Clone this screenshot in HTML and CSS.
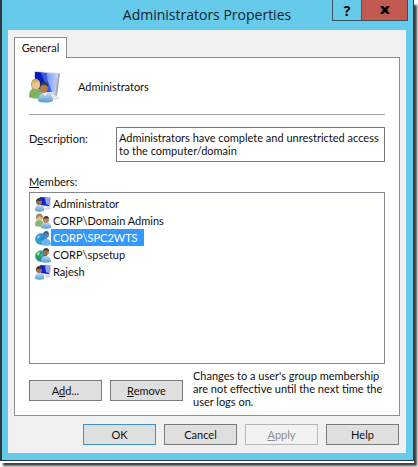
FILE: index.html
```html
<!DOCTYPE html>
<html lang="en">
<head>
    <meta charset="UTF-8">
    <meta name="viewport" content="width=device-width, initial-scale=1.0">
    <title>Administrators Properties</title>
    <link rel="stylesheet" href="styles.css">
</head>
<body>
    <!-- Shared icon shapes -->
    <svg class="sprite" aria-hidden="true">
        <defs>
            <linearGradient id="screen" x1="0" y1="0" x2="1" y2="0">
                <stop offset="0" stop-color="#0a14b4"/>
                <stop offset="0.45" stop-color="#1c35dc"/>
                <stop offset="0.55" stop-color="#7f9df2"/>
                <stop offset="1" stop-color="#c3d5fa"/>
            </linearGradient>
            <radialGradient id="globe" cx="0.35" cy="0.3" r="0.8">
                <stop offset="0" stop-color="#8cd4f4"/>
                <stop offset="0.6" stop-color="#2077cc"/>
                <stop offset="1" stop-color="#114a98"/>
            </radialGradient>
            <linearGradient id="blueShirt" x1="0" y1="0" x2="0" y2="1">
                <stop offset="0" stop-color="#bcdcf4"/>
                <stop offset="1" stop-color="#5a9bcf"/>
            </linearGradient>
        </defs>
        <symbol id="icon-user" viewBox="0 0 16 16">
            <path d="M4 1l12 0-1 10-10-1z" fill="#c9ced6"/>
            <path d="M5 1l10 1-1 8-8-1z" fill="#1325c4"/>
            <path d="M10 2l5 0-1 7-3-1z" fill="#8da8f0"/>
            <path d="M9 12l5-1 2 2-5 1z" fill="#d5d8dd"/>
            <path d="M0 15c0-4 1-6 4-6s6 2 5 6c-3 1-6 1-9 0z" fill="url(#blueShirt)"/>
            <circle cx="4" cy="6" r="3" fill="#a56e4b"/>
            <path d="M1 6c0-5 6-5 6-1L3 5z" fill="#343a43"/>
        </symbol>
        <symbol id="icon-group" viewBox="0 0 16 16">
            <path d="M0 13c0-4 1-6 4-6s5 2 5 6c-3 1-6 1-9 0z" fill="#87b873"/>
            <circle cx="4.500" cy="4.500" r="3.200" fill="#e1b887"/>
            <path d="M1 6c-1-7 7-7 7-1L4 3z" fill="#9c8b4c"/>
            <path d="M6 15c0-4 2-6 5-6s5 2 5 6c-3 1-7 1-10 0z" fill="url(#blueShirt)"/>
            <circle cx="11" cy="7" r="3" fill="#b98560"/>
            <path d="M8 7c0-5 6-5 6-1l-4-1z" fill="#3b3533"/>
        </symbol>
        <symbol id="icon-domain-user" viewBox="0 0 16 16">
            <circle cx="6" cy="9" r="5.800" fill="url(#globe)"/>
            <path d="M1 7l4-3 3 2-3 3 2 2-2 3c-3-1-5-4-4-7z" fill="#29a452"/>
            <path d="M2 7l2-2 1 1-2 3z" fill="#b9ecc7"/>
            <path d="M6 15c0-4 2-6 5-6s5 2 5 6c-3 1-7 1-10 0z" fill="url(#blueShirt)"/>
            <circle cx="11" cy="5" r="3" fill="#a56e4b"/>
            <path d="M8 5c0-5 6-5 6-1l-4-1z" fill="#303740"/>
        </symbol>
        <symbol id="icon-domain-user-selected" viewBox="0 0 16 16">
            <circle cx="6" cy="9" r="5.800" fill="#2387d8"/>
            <path d="M1 7l4-3 3 2-3 3 2 2-2 3c-3-1-5-4-4-7z" fill="#32a0c5"/>
            <path d="M2 7l2-2 1 1-2 3z" fill="#8fd0f2"/>
            <path d="M6 15c0-4 2-6 5-6s5 2 5 6c-3 1-7 1-10 0z" fill="#6db4ee"/>
            <circle cx="11" cy="5" r="3" fill="#5b84ad"/>
            <path d="M8 5c0-5 6-5 6-1l-4-1z" fill="#27629f"/>
        </symbol>
    </svg>

    <div class="window">
        <div class="title-bar">
            <h1>Administrators Properties</h1>
            <div class="window-buttons">
                <button type="button" class="help-btn" aria-label="Help">?</button>
                <button type="button" class="close-btn" aria-label="Close">
                    <svg viewBox="0 0 10 8"><path d="M0 0h3l2 2 2-2h3L7 4l3 4H7L5 6 3 8H0l3-4z"/></svg>
                </button>
            </div>
        </div>

        <form class="client">
            <div class="tabs" role="tablist">
                <button type="button" class="tab" role="tab" aria-selected="true">General</button>
            </div>

            <div class="panel" role="tabpanel">
                <div class="group-header">
                    <svg class="group-icon" viewBox="0 0 32 32">
                        <ellipse cx="24" cy="27" rx="7" ry="2" fill="#e4e5e8"/>
                        <path d="M5 0l26 2-3 23-22-3z" fill="#d4d8df"/>
                        <path d="M31 2l-3 23-2-1 3-21z" fill="#a4a9b3"/>
                        <path d="M6 1l23 2-3 18-20-2z" fill="url(#screen)"/>
                        <path d="M6 1l9 1 6 19-15-2z" fill="#0b18bd"/>
                        <path d="M12 2l4 0 7 19-4-1z" fill="#365be6"/>
                        <path d="M0 26c0-6 2-9 7-9s7 3 7 9c-4 2-10 2-14 0z" fill="#7db45a"/>
                        <path d="M2 15c-1-9 10-10 9 0l-2 4H4z" fill="#b9a45e"/>
                        <circle cx="7" cy="14" r="4" fill="#edc394"/>
                        <path d="M2 13c1-6 9-5 9-1L7 11z" fill="#cbb66c"/>
                        <path d="M9 30c0-6 3-8 7-8s8 2 8 8c-4 2-11 2-15 0z" fill="url(#blueShirt)"/>
                        <path d="M14 22l2 3 2-3z" fill="#f2f7fb"/>
                        <ellipse cx="15" cy="17" rx="4" ry="5" fill="#b47a52"/>
                        <path d="M11 16c-1-7 9-7 8 0-2-3-6-3-8 0z" fill="#343a3e"/>
                    </svg>
                    <span>Administrators</span>
                </div>

                <div class="description-row">
                    <label for="description">D<u>e</u>scription:</label>
                    <textarea id="description" rows="2" spellcheck="false">Administrators have complete and unrestricted access to the computer/domain</textarea>
                </div>

                <div class="members-label" id="membersLabel"><u>M</u>embers:</div>
                <ul class="members" role="listbox" aria-labelledby="membersLabel" tabindex="0">
                    <li role="option"><svg><use href="#icon-user"/></svg><span>Administrator</span></li>
                    <li role="option"><svg><use href="#icon-group"/></svg><span>CORP\Domain Admins</span></li>
                    <li role="option" class="selected" aria-selected="true"><svg><use href="#icon-domain-user-selected"/></svg><span>CORP\SPC2WTS</span></li>
                    <li role="option"><svg><use href="#icon-domain-user"/></svg><span>CORP\spsetup</span></li>
                    <li role="option"><svg><use href="#icon-user"/></svg><span>Rajesh</span></li>
                </ul>

                <div class="member-actions">
                    <button type="button" class="btn">A<u>d</u>d...</button>
                    <button type="button" class="btn"><u>R</u>emove</button>
                    <p>Changes to a user's group membership are not effective until the next time the user logs on.</p>
                </div>
            </div>

            <div class="footer">
                <button type="button" class="btn default">OK</button>
                <button type="button" class="btn">Cancel</button>
                <button type="button" class="btn" disabled><u>A</u>pply</button>
                <button type="button" class="btn">Help</button>
            </div>
        </form>
    </div>
</body>
</html>
```

FILE: styles.css
```css
* {
    box-sizing: border-box;
}

body {
    margin: 0;
    min-height: 100vh;
    display: flex;
    padding: 0 4px 6px 0;
    background-color: #fff;
    font-family: Lato, "Liberation Sans", Arial, sans-serif;
    font-size: 11px;
    line-height: 13px;
    color: #111;
    overflow: hidden;
}

button,
textarea {
    font: inherit;
    color: inherit;
}

.sprite {
    position: absolute;
    width: 0;
    height: 0;
}

/* Window frame */
.window {
    flex: 1;
    display: flex;
    flex-direction: column;
    padding: 0 7px 7px 6px;
    background-color: #66caea;
    border: solid #2d383d;
    border-width: 0 1px 1px 2px;
    box-shadow: 0 2px 0 #fff, 3px 5px 2px #444;
}

.title-bar {
    display: flex;
    justify-content: center;
    height: 30px;
    position: relative;
}

.title-bar h1 {
    margin: 0;
    padding-top: 5px;
    font-family: "Open Sans", "Noto Sans", sans-serif;
    font-size: 14px;
    font-weight: normal;
    line-height: 20px;
    color: #10242c;
}

.window-buttons {
    position: absolute;
    top: 0;
    right: -2px;
    display: flex;
    height: 21px;
    border: solid #37525e;
    border-width: 0 1px 1px;
}

.window-buttons button {
    display: flex;
    align-items: center;
    justify-content: center;
    padding: 0;
    border: 0;
}

.window-buttons .help-btn {
    width: 28px;
    background-color: #66caea;
    font-family: "Open Sans", sans-serif;
    font-size: 14px;
    font-weight: bold;
    color: #000;
}

.window-buttons .close-btn {
    width: 46px;
    background-color: #c35a50;
    border-left: 1px solid #6b4a4a;
}

.close-btn svg {
    width: 10px;
    height: 8px;
}

/* Dialog body */
.client {
    flex: 1;
    display: flex;
    flex-direction: column;
    padding: 7px 6px 8px;
    background-color: #f0f0f0;
}

.tabs {
    display: flex;
}

.tab {
    width: 53px;
    height: 21px;
    margin-bottom: -1px;
    padding: 0 0 2px;
    background-color: #fff;
    border: 1px solid #8c8e96;
    border-bottom: 0;
    z-index: 1;
}

.panel {
    flex: 1;
    display: flex;
    flex-direction: column;
    padding: 13px 14px 7px;
    background-color: #fff;
    border: 1px solid #8c8e96;
}

.group-header {
    display: flex;
    align-items: center;
    gap: 17px;
    height: 44px;
    padding-bottom: 12px;
    border-bottom: 1px solid #a0a0a0;
}

.group-icon {
    width: 32px;
    height: 32px;
}

.description-row {
    display: flex;
    margin-top: 12px;
}

.description-row label {
    width: 87px;
    padding-top: 5px;
}

textarea {
    flex: 1;
    height: 35px;
    padding: 3px 2px;
    border: 1px solid #75777a;
    background-color: #fff;
    resize: none;
    overflow: hidden;
}

.members-label {
    margin: 13px 0 4px;
}

.members {
    flex: 1;
    margin: 0;
    padding: 2px 5px;
    list-style: none;
    border: 1px solid #828790;
}

.members li {
    display: flex;
    align-items: center;
    height: 17px;
}

.members svg {
    width: 16px;
    height: 16px;
}

.members span {
    padding: 2px;
}

.members .selected span {
    padding-right: 6px;
    background-color: #3399ff;
    outline: 1px dotted #b87a3c;
    outline-offset: -1px;
    color: #fff;
}

/* Buttons */
.btn {
    width: 73px;
    height: 21px;
    padding: 0;
    background-color: #dfdfdf;
    border: 1px solid #7a7a7a;
}

.btn.default {
    border-color: #4590c8;
}

.btn:disabled {
    background-color: #f2f2f2;
    border-color: #b5b8ba;
    color: #8c8c8c;
}

.member-actions {
    display: flex;
    align-items: center;
    gap: 8px;
    margin-top: 5px;
}

.member-actions .btn {
    flex-shrink: 0;
    margin-top: 4px;
}

.member-actions p {
    margin: 0;
    padding-left: 2px;
}

.footer {
    display: flex;
    justify-content: flex-end;
    gap: 8px;
    margin-top: 8px;
    padding-right: 1px;
}
```
